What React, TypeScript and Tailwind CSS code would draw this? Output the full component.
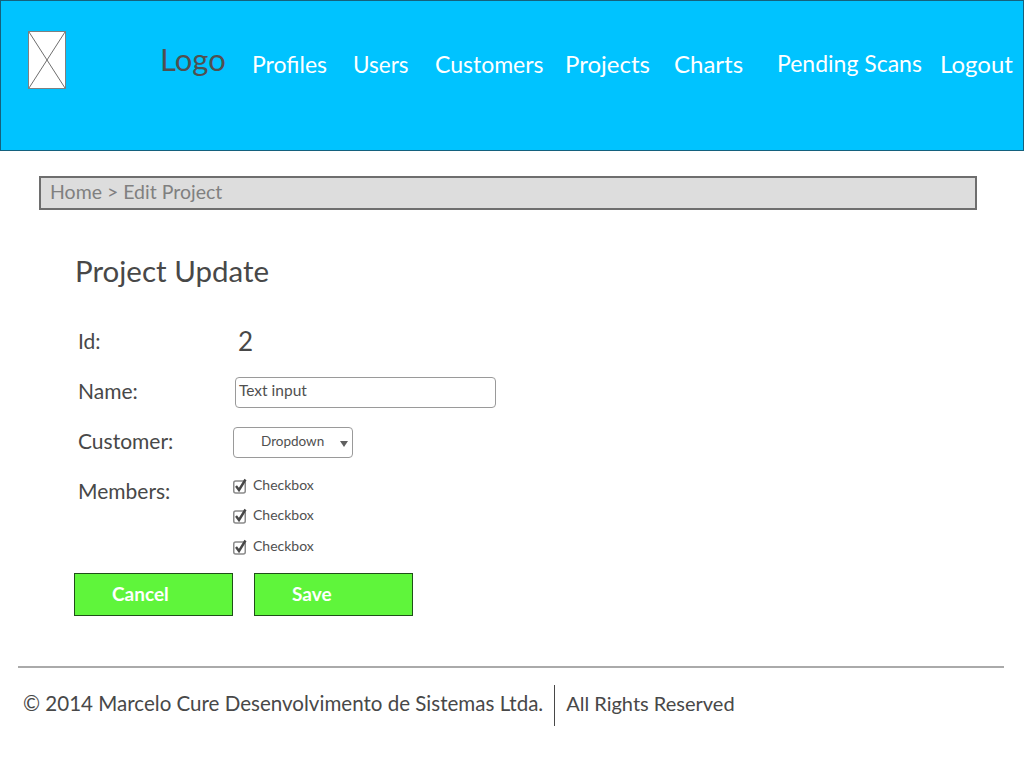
import React from 'react';

const font = { sans: "font-['Lato',sans-serif]" };

const navItems = [
  { label: 'Profiles', className: 'w-[102px] pt-[1px] text-[23px]' },
  { label: 'Users', className: 'w-[82px] -ml-[1px] pt-[2px] text-[22.5px]' },
  { label: 'Customers', className: 'w-[131px] pt-[1px] text-[23px]' },
  { label: 'Projects', className: 'w-[109px] -ml-[1px] pt-[1px] text-[24px]' },
  { label: 'Charts', className: 'w-[103px] pt-[1px] text-[24px]' },
  { label: 'Pending Scans', className: 'w-[164px] text-[23px]' },
  { label: 'Logout', className: 'w-[73px] -ml-[1px] pt-[1px] text-[24px]' },
];

function Placeholder() {
  return (
    <svg width="38" height="58" viewBox="0 0 38 58" className="shrink-0 bg-white">
      <rect x="0.5" y="0.5" width="37" height="57" fill="none" stroke="#808080" />
      <path d="M1 1 L37 57 M37 1 L1 57" stroke="#6e6e6e" strokeWidth="1" fill="none" />
    </svg>
  );
}

function CheckRow() {
  return (
    <div className="flex h-[30.5px] shrink-0 items-center gap-[6px]">
      <svg width="14" height="16" viewBox="0 0 14 16" className="shrink-0">
        <rect x="0.75" y="3" width="11.5" height="12" rx="2" fill="white" stroke="#8a8a8a" strokeWidth="1.5" />
        <path d="M3 8 L6 12 L12.5 1.5" fill="none" stroke="#474747" strokeWidth="2.4" />
      </svg>
      <span className="pb-[2px] text-[14px] leading-none text-[#505050]">Checkbox</span>
    </div>
  );
}

function FormRow({ label, className, children }: { label: string; className: string; children: React.ReactNode }) {
  return (
    <div className={`flex ${className}`}>
      <div className="w-[155px] shrink-0 text-[21px] leading-[28px] text-[#484848]">{label}</div>
      {children}
    </div>
  );
}

export default function App() {
  return (
    <div className={`h-[768px] w-[1024px] overflow-hidden bg-white ${font.sans}`}>
      {/* Header */}
      <header className="flex h-[151px] border border-[#14617d] bg-[#00c3ff] pl-[27px] pt-[30px]">
        <Placeholder />
        <div className="ml-[94px] w-[92px] pt-[8px] text-[31px] leading-[40px] text-[#505050]">Logo</div>
        <nav className="flex pt-[15px] leading-[34px] text-white">
          {navItems.map((item) => (
            <span key={item.label} className={`whitespace-nowrap ${item.className}`}>
              {item.label}
            </span>
          ))}
        </nav>
      </header>

      {/* Breadcrumb */}
      <div className="ml-[39px] mt-[25px] flex h-[34px] w-[938px] items-center border-2 border-[#6e6e6e] bg-[#dddddd] pb-[3px] pl-[9px] text-[19.5px] text-[#808080]">
        Home &gt; Edit Project
      </div>

      {/* Form */}
      <main className="pl-[74px]">
        <h1 className="ml-[1px] mt-[41px] text-[29.5px] font-normal leading-[40px] text-[#484848]">Project Update</h1>

        <div className="ml-[4px]">
          <FormRow label="Id:" className="mt-[36px] h-[50px]">
            <span className="ml-[5px] text-[26px] leading-[28px] text-[#484848]">2</span>
          </FormRow>
          <FormRow label="Name:" className="h-[50px]">
            <div className="ml-[2px] flex h-[31px] w-[261px] items-center rounded-[4px] border-[1.5px] border-[#9a9a9a] pb-[3px] pl-[3px] text-[15.5px] text-[#505050]">
              Text input
            </div>
          </FormRow>
          <FormRow label="Customer:" className="h-[50px]">
            <div className="flex h-[31px] w-[120px] items-center rounded-[4px] border-[1.5px] border-[#9a9a9a] pb-[3px] pl-[27px] text-[13.5px] text-[#505050]">
              Dropdown
              <svg width="8" height="6" viewBox="0 0 8 6" className="ml-[16px] mt-[5px]">
                <path d="M0 0 H8 L4 6 Z" fill="#606060" />
              </svg>
            </div>
          </FormRow>
          <FormRow label="Members:" className="h-[81px]">
            <div className="-mt-[6px] flex flex-col">
              <CheckRow />
              <div className="-mt-[1px]">
                <CheckRow />
              </div>
              <div className="mt-[1px]">
                <CheckRow />
              </div>
            </div>
          </FormRow>
        </div>

        <div className="mt-[15px] flex gap-[21px]">
          <button className="h-[43px] w-[159px] border border-[#1f4f18] bg-[#5ff53b] pl-[37px] text-left text-[19px] font-bold text-white">
            Cancel
          </button>
          <button className="h-[43px] w-[159px] border border-[#1f4f18] bg-[#5ff53b] pl-[37px] text-left text-[19px] font-bold text-white">
            Save
          </button>
        </div>
      </main>

      {/* Footer */}
      <footer className="ml-[18px] mt-[50px] w-[986px] border-t-2 border-[#aaaaaa] pl-[5px] pt-[16px]">
        <div className="flex items-start leading-[38px] text-[#484848]">
          <span className="whitespace-nowrap text-[20.55px]">© 2014 Marcelo Cure Desenvolvimento de Sistemas Ltda.</span>
          <span className="ml-[11px] mr-[11px] mt-[1px] h-[41px] w-px bg-[#484848]" />
          <span className="whitespace-nowrap text-[20px]">All Rights Reserved</span>
        </div>
      </footer>
    </div>
  );
}
